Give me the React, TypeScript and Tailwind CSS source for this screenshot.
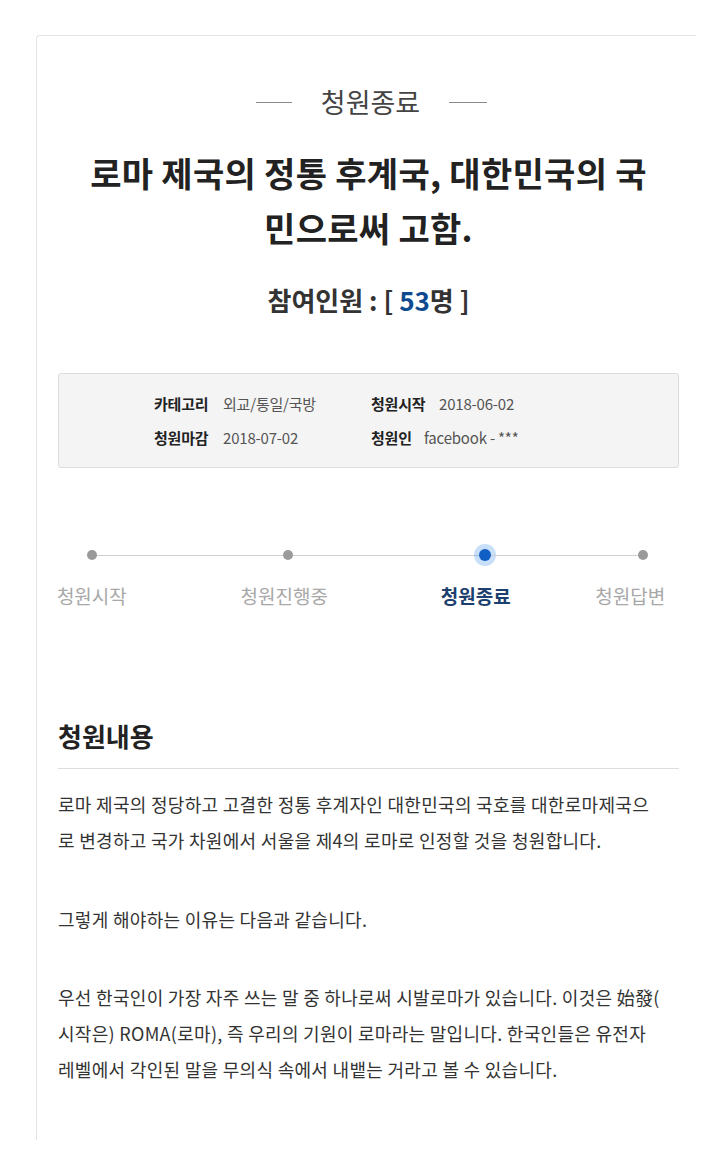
const font = { fontFamily: '"Noto Sans CJK KR", "Noto Sans", sans-serif' };

function Step({ label, active }: { label: string; active?: boolean }) {
    return (
        <div
            className={
                "w-[100px] text-center text-[19px] leading-[26px] " +
                (active ? "font-bold text-[#1c3f6e]" : "text-[#a8a8a8]")
            }
        >
            {label}
        </div>
    );
}

export default function App() {
    return (
        <div className="min-h-[1151px] bg-white pt-[35px]" style={font}>
            <div className="ml-[36px] w-[660px] min-h-[1105px] border-l border-t border-[#e3e3e3] rounded-tl-[4px] pt-[50px] pl-[21px] pr-[17px]">
                {/* status */}
                <div className="flex items-center justify-center gap-[29px] pl-[6px]">
                    <div className="w-[36px] h-px bg-[#8a8a8a]" />
                    <span className="text-[27px] leading-[32px] text-[#444]">청원종료</span>
                    <div className="w-[38px] h-px bg-[#8a8a8a]" />
                </div>

                {/* title */}
                <h1 className="mt-[27px] text-center text-[34px] leading-[55px] font-bold text-[#222] tracking-[0.3px]">
                    로마 제국의 정통 후계국, 대한민국의 국<br />
                    민으로써 고함.
                </h1>

                <div className="mt-[29px] text-center text-[26px] leading-[32px] font-bold text-[#333]">
                    참여인원 : [ <span className="text-[#0d4a8f]">53</span>명 ]
                </div>

                {/* info box */}
                <div className="mt-[57px] bg-[#f4f4f4] border border-[#dcdcdc] rounded-[3px] pt-[18px] pb-[17px] pl-[95px] text-[15px] leading-[24px] tracking-[-0.2px]">
                    <div className="flex">
                        <div className="flex w-[217px]">
                            <span className="w-[69px] font-bold text-[#222]">카테고리</span>
                            <span className="text-[#555]">외교/통일/국방</span>
                        </div>
                        <div className="flex">
                            <span className="w-[68px] font-bold text-[#222]">청원시작</span>
                            <span className="text-[#555]">2018-06-02</span>
                        </div>
                    </div>
                    <div className="flex mt-[10px]">
                        <div className="flex w-[217px]">
                            <span className="w-[69px] font-bold text-[#222]">청원마감</span>
                            <span className="text-[#555]">2018-07-02</span>
                        </div>
                        <div className="flex">
                            <span className="w-[53px] font-bold text-[#222]">청원인</span>
                            <span className="text-[#555]">facebook - ***</span>
                        </div>
                    </div>
                </div>

                {/* progress */}
                <div className="mt-[76px] ml-[29px] flex items-center h-[22px]">
                    <div className="w-[10px] h-[10px] rounded-full bg-[#9a9a9a]" />
                    <div className="w-[186px] h-px bg-[#cfcfcf]" />
                    <div className="w-[10px] h-[10px] rounded-full bg-[#9a9a9a]" />
                    <div className="w-[186px] h-px bg-[#cfcfcf]" />
                    <div className="w-[12px] h-[12px] rounded-full bg-[#0f5fc4] shadow-[0_0_0_5px_rgba(70,150,235,0.3)]" />
                    <div className="w-[147px] h-px bg-[#cfcfcf]" />
                    <div className="w-[10px] h-[10px] rounded-full bg-[#9a9a9a]" />
                </div>
                <div className="mt-[17px] flex ml-[-15px]">
                    <Step label="청원시작" />
                    <div className="w-[97px]" />
                    <Step label="청원진행중" />
                    <div className="w-[96px]" />
                    <Step label="청원종료" active />
                    <div className="w-[58px]" />
                    <Step label="청원답변" />
                </div>

                {/* content */}
                <h2 className="mt-[111px] text-[26px] leading-[32px] font-bold text-[#222]">청원내용</h2>
                <div className="mt-[16px] h-px bg-[#dedede]" />
                <div className="mt-[17px] text-[18px] leading-[36px] text-[#333] tracking-[0.3px] whitespace-nowrap">
                    <p>
                        로마 제국의 정당하고 고결한 정통 후계자인 대한민국의 국호를 대한로마제국으<br />
                        로 변경하고 국가 차원에서 서울을 제4의 로마로 인정할 것을 청원합니다.
                    </p>
                    <p className="mt-[43px]">그렇게 해야하는 이유는 다음과 같습니다.</p>
                    <p className="mt-[42px]">
                        우선 한국인이 가장 자주 쓰는 말 중 하나로써 시발로마가 있습니다. 이것은 始發(<br />
                        시작은) ROMA(로마), 즉 우리의 기원이 로마라는 말입니다. 한국인들은 유전자<br />
                        레벨에서 각인된 말을 무의식 속에서 내뱉는 거라고 볼 수 있습니다.
                    </p>
                </div>
            </div>
        </div>
    );
}
